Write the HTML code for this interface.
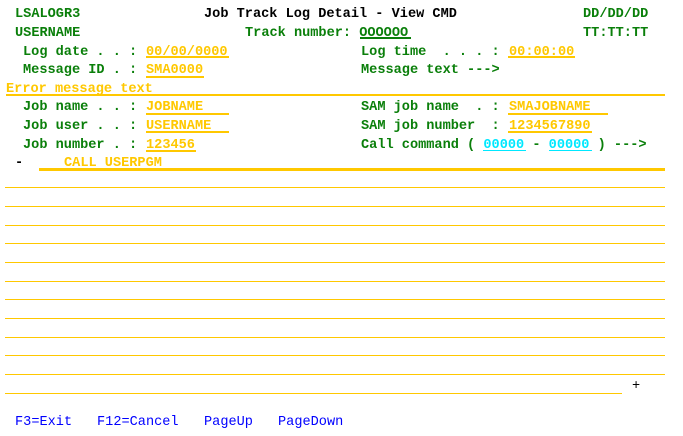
<!DOCTYPE html>
<html><head><style>
body{margin:0;width:683px;height:436px;background:#fff;position:relative;overflow:hidden;font-family:"Liberation Mono",monospace;font-size:13.6px;font-weight:bold;}
.t{position:absolute;line-height:16px;white-space:pre;margin-top:2px}
.g{color:#0a7f0a}.y{color:#ffc800}.k{color:#000}.b{color:#0000ff}.c{color:#00e8ff}
.l{position:absolute;background:#ffc800;height:1px}
</style></head><body>
<div class="t g" style="left:15px;top:5px">LSALOGR3</div>
<div class="t k" style="left:204px;top:5px">Job Track Log Detail - View CMD</div>
<div class="t g" style="left:583px;top:5px">DD/DD/DD</div>
<div class="t g" style="left:15px;top:24px">USERNAME</div>
<div class="t g" style="left:245px;top:24px">Track number: OOOOOO</div>
<div class="l" style="left:360px;top:37px;width:51px;height:2px;background:#0a7f0a"></div>
<div class="t g" style="left:583px;top:24px">TT:TT:TT</div>

<div class="t g" style="left:23px;top:43px">Log date . . :</div>
<div class="t y" style="left:146px;top:43px">00/00/0000</div>
<div class="l" style="left:146px;top:56px;width:83px;height:2px"></div>
<div class="t g" style="left:361px;top:43px">Log time  . . . :</div>
<div class="t y" style="left:509px;top:43px">00:00:00</div>
<div class="l" style="left:508px;top:56px;width:67px;height:2px"></div>

<div class="t g" style="left:23px;top:61px">Message ID . :</div>
<div class="t y" style="left:146px;top:61px">SMA0000</div>
<div class="l" style="left:146px;top:76px;width:58px;height:2px"></div>
<div class="t g" style="left:361px;top:61px">Message text ---&gt;</div>

<div class="t y" style="left:6px;top:80px">Error message text</div>
<div class="l" style="left:6px;top:94px;width:659px;height:2px"></div>

<div class="t g" style="left:23px;top:98px">Job name . . :</div>
<div class="t y" style="left:146px;top:98px">JOBNAME</div>
<div class="l" style="left:146px;top:113px;width:83px;height:2px"></div>
<div class="t g" style="left:361px;top:98px">SAM job name  . :</div>
<div class="t y" style="left:509px;top:98px">SMAJOBNAME</div>
<div class="l" style="left:508px;top:113px;width:100px;height:2px"></div>

<div class="t g" style="left:23px;top:117px">Job user . . :</div>
<div class="t y" style="left:146px;top:117px">USERNAME</div>
<div class="l" style="left:146px;top:131px;width:83px;height:2px"></div>
<div class="t g" style="left:361px;top:117px">SAM job number  :</div>
<div class="t y" style="left:509px;top:117px">1234567890</div>
<div class="l" style="left:508px;top:131px;width:84px;height:2px"></div>

<div class="t g" style="left:23px;top:136px">Job number . :</div>
<div class="t y" style="left:146px;top:136px">123456</div>
<div class="l" style="left:146px;top:150px;width:50px;height:2px"></div>
<div class="t g" style="left:361px;top:136px">Call command ( <span class="c">00000</span> - <span class="c">00000</span> ) ---&gt;</div>
<div class="l" style="left:483px;top:150px;width:43px;background:#00e8ff"></div>
<div class="l" style="left:549px;top:150px;width:43px;background:#00e8ff"></div>

<div class="t k" style="left:15px;top:154px">-</div>
<div class="t y" style="left:64px;top:154px">CALL USERPGM</div>
<div class="l" style="left:39px;top:168px;width:626px;height:3px"></div>

<div class="l" style="left:5px;top:187px;width:660px"></div>
<div class="l" style="left:5px;top:206px;width:660px"></div>
<div class="l" style="left:5px;top:225px;width:660px"></div>
<div class="l" style="left:5px;top:243px;width:660px"></div>
<div class="l" style="left:5px;top:262px;width:660px"></div>
<div class="l" style="left:5px;top:281px;width:660px"></div>
<div class="l" style="left:5px;top:299px;width:660px"></div>
<div class="l" style="left:5px;top:318px;width:660px"></div>
<div class="l" style="left:5px;top:337px;width:660px"></div>
<div class="l" style="left:5px;top:355px;width:660px"></div>
<div class="l" style="left:5px;top:374px;width:660px"></div>
<div class="l" style="left:5px;top:393px;width:617px"></div>
<div class="t k" style="left:632px;top:377px;font-weight:normal">+</div>

<div class="t b" style="left:15px;top:413px;font-weight:normal">F3=Exit</div>
<div class="t b" style="left:97px;top:413px;font-weight:normal">F12=Cancel</div>
<div class="t b" style="left:204px;top:413px;font-weight:normal">PageUp</div>
<div class="t b" style="left:278px;top:413px;font-weight:normal">PageDown</div>
</body></html>
